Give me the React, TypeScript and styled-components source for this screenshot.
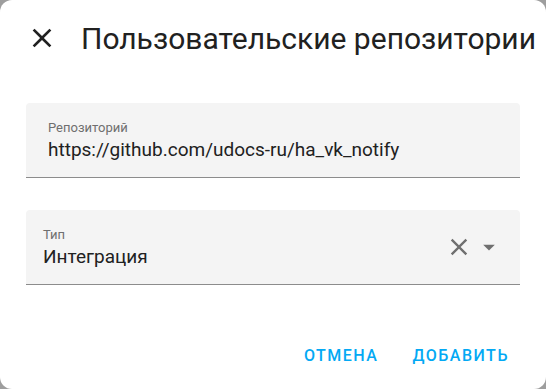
import React from "react";
import styled, { createGlobalStyle } from "styled-components";

const GlobalStyle = createGlobalStyle`
  html, body {
    margin: 0;
    padding: 0;
    background: #9e9e9e;
    font-family: Roboto, "Noto Sans", sans-serif;
  }
`;

const PRIMARY = "#03a9f4";

const Dialog = styled.div`
  width: 546px;
  height: 389px;
  box-sizing: border-box;
  background: #fff;
  border-radius: 12px;
  display: flex;
  flex-direction: column;
  overflow: hidden;
`;

const Header = styled.div`
  display: flex;
  align-items: center;
  gap: 23px;
  padding: 20px 0 0 26px;
  height: 36px;
`;

const IconButton = styled.button`
  border: none;
  background: none;
  padding: 0;
  width: 32px;
  height: 32px;
  display: flex;
  align-items: center;
  justify-content: center;
  color: #212121;
  cursor: pointer;
`;

const Title = styled.h2`
  margin: 0;
  font-size: 30px;
  font-weight: 400;
  color: #212121;
  white-space: nowrap;
  letter-spacing: 0;
`;

const Content = styled.div`
  display: flex;
  flex-direction: column;
  gap: 32px;
  padding: 47px 26px 0 26px;
`;

const Field = styled.div<{ $inset: number }>`
  height: 74px;
  background: #f4f4f4;
  border-radius: 4px 4px 0 0;
  border-bottom: 1px solid #8c8c8c;
  display: flex;
  align-items: center;
  padding: 0 17px 0 ${(p) => p.$inset}px;
`;

const FieldText = styled.div`
  flex: 1;
  display: flex;
  flex-direction: column;
  gap: 3px;
  padding-top: 1px;
`;

const Label = styled.span`
  font-size: 13px;
  color: #6f6f6f;
  line-height: 15px;
`;

const Value = styled.span`
  font-size: 19px;
  color: #212121;
  line-height: 23px;
`;

const Trailing = styled.div`
  display: flex;
  align-items: center;
  gap: 2px;
  color: #6f6f6f;
`;

const Actions = styled.div`
  margin-top: auto;
  display: flex;
  justify-content: flex-end;
  gap: 18px;
  padding: 0 29px 16px 0;
`;

const TextButton = styled.button`
  border: none;
  background: none;
  padding: 0 8px;
  height: 36px;
  font-family: Roboto, "Noto Sans", sans-serif;
  font-size: 16px;
  font-weight: 500;
  letter-spacing: 1.5px;
  color: ${PRIMARY};
  text-transform: uppercase;
  cursor: pointer;
`;

const CloseIcon = ({ size = 24 }: { size?: number }) => (
  <svg width={size} height={size} viewBox="0 0 24 24" fill="currentColor">
    <path d="M19,6.41L17.59,5L12,10.59L6.41,5L5,6.41L10.59,12L5,17.59L6.41,19L12,13.41L17.59,19L19,17.59L13.41,12L19,6.41Z" />
  </svg>
);

const MenuDownIcon = ({ size = 24 }: { size?: number }) => (
  <svg width={size} height={size} viewBox="0 0 24 24" fill="currentColor">
    <path d="M7,10L12,15L17,10H7Z" />
  </svg>
);

export default function App() {
  return (
    <>
      <GlobalStyle />
      <Dialog>
        <Header>
          <IconButton aria-label="close">
            <CloseIcon size={32} />
          </IconButton>
          <Title>Пользовательские репозитории</Title>
        </Header>
        <Content>
          <Field $inset={22}>
            <FieldText>
              <Label>Репозиторий</Label>
              <Value>https://github.com/udocs-ru/ha_vk_notify</Value>
            </FieldText>
          </Field>
          <Field $inset={17}>
            <FieldText>
              <Label>Тип</Label>
              <Value>Интеграция</Value>
            </FieldText>
            <Trailing>
              <CloseIcon size={28} />
              <MenuDownIcon size={28} />
            </Trailing>
          </Field>
        </Content>
        <Actions>
          <TextButton>Отмена</TextButton>
          <TextButton>Добавить</TextButton>
        </Actions>
      </Dialog>
    </>
  );
}
